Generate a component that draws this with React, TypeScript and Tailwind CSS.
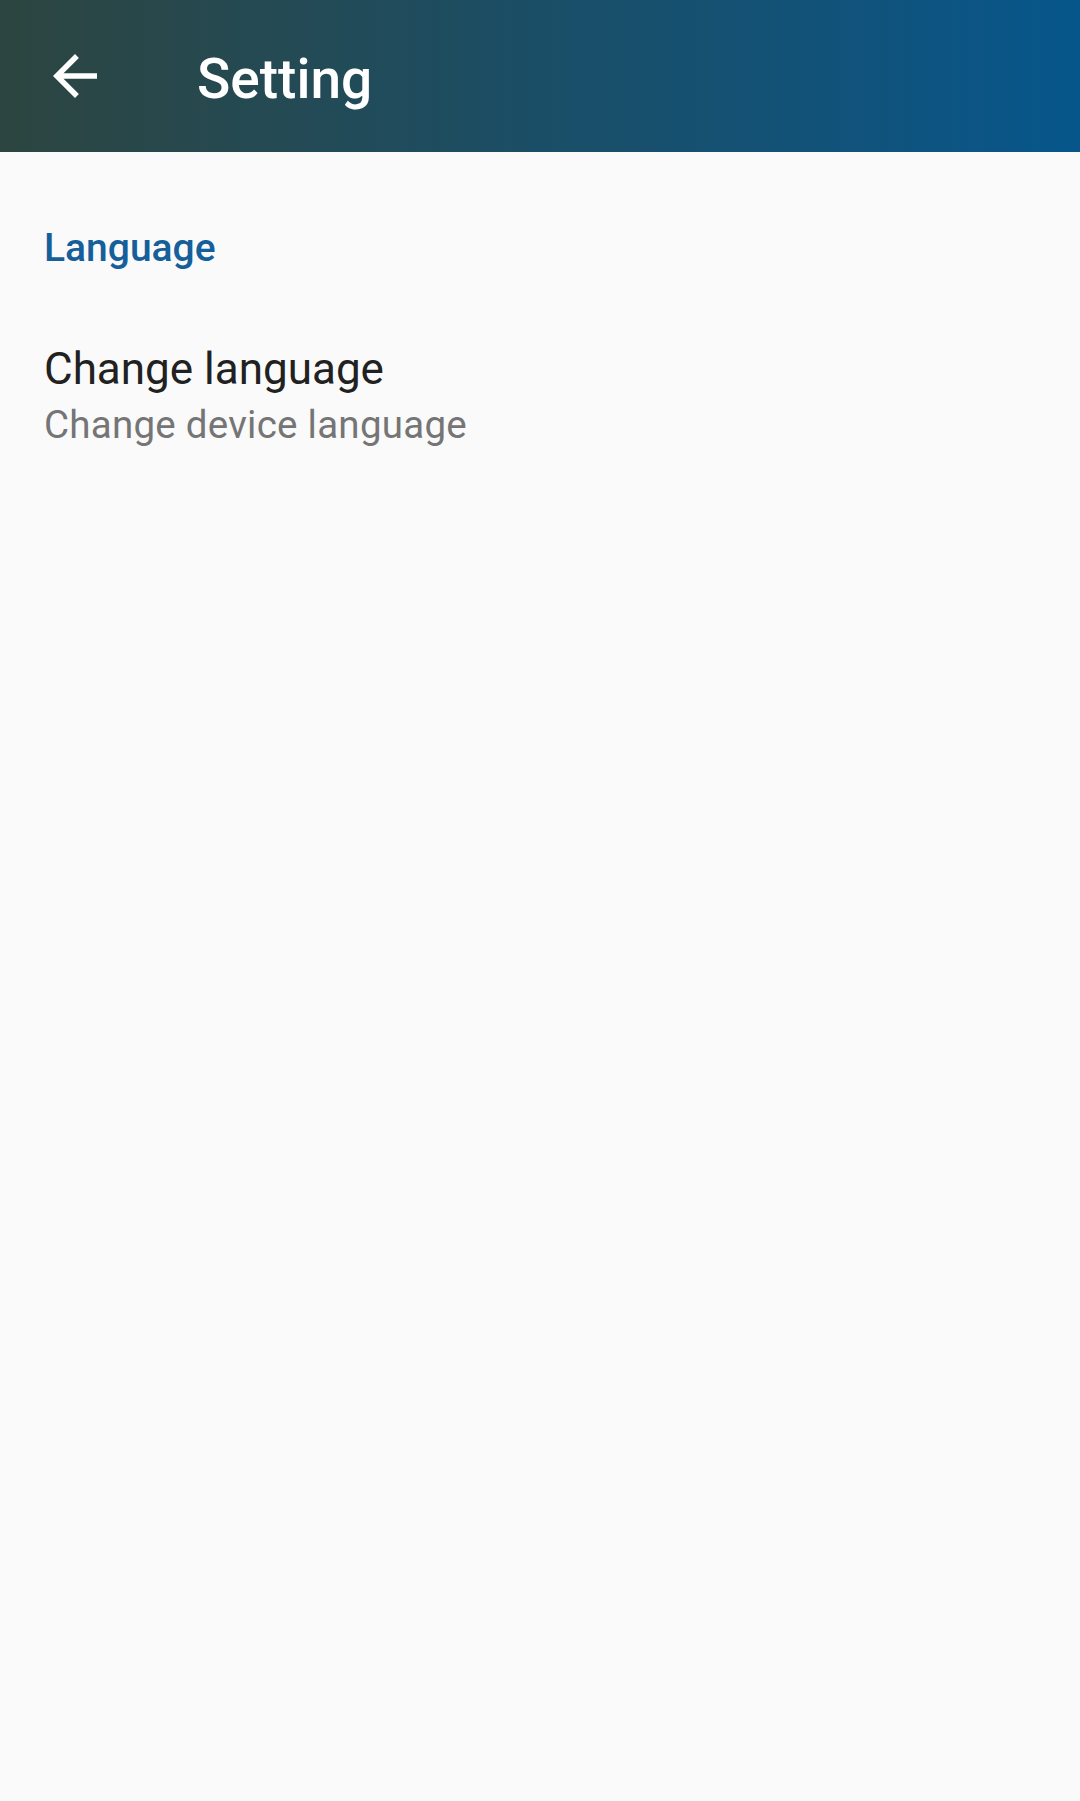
export default function App() {
  return (
    <div className="min-h-[1801px] w-[1080px] bg-[#fafafa] font-['Roboto',_'Noto_Sans',_sans-serif]">
      {/* App bar */}
      <header className="flex h-[152px] items-center bg-gradient-to-r from-[#2c4540] via-[#1a4e66] to-[#06568b]">
        <button className="ml-[42px] flex h-[66px] w-[66px] items-center justify-center text-white">
          <svg viewBox="0 0 24 24" width="66" height="66" fill="currentColor">
            <path d="M20 11H7.83l5.59-5.59L12 4l-8 8 8 8 1.41-1.41L7.83 13H20v-2z" />
          </svg>
        </button>
        <h1 className="ml-[89px] mt-[6px] text-[55px] font-medium leading-none text-white">Setting</h1>
      </header>

      {/* Preferences */}
      <section className="px-[44px] pt-[73px]">
        <p className="text-[39px] font-medium leading-[46px] text-[#15609a]">Language</p>
        <div className="mt-[72px]">
          <p className="text-[44px] leading-[52px] text-[#212121]">Change language</p>
          <p className="mt-[7px] text-[38.5px] leading-[46px] tracking-[0.25px] text-[#757575]">Change device language</p>
        </div>
      </section>
    </div>
  )
}
